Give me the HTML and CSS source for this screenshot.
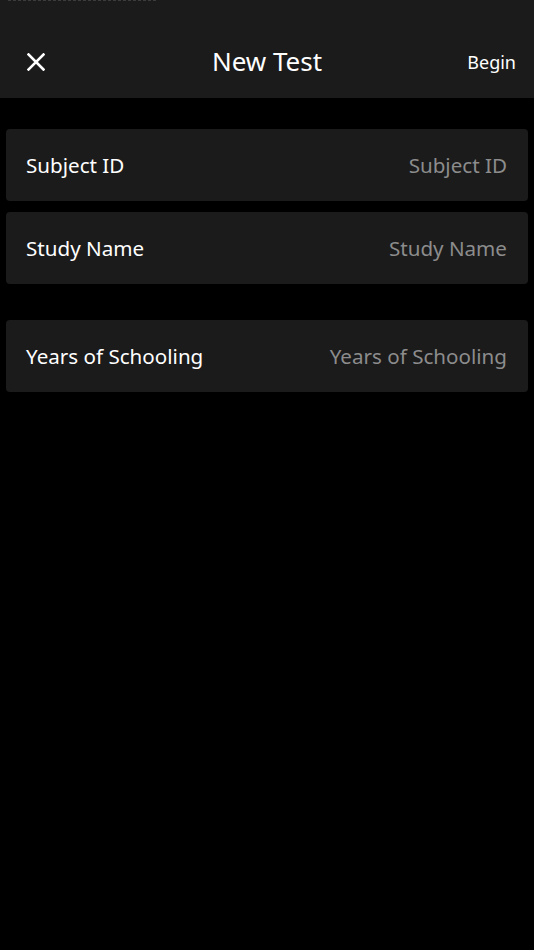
FILE: index.html
```html
<!DOCTYPE html>
<html>
<head>
<meta charset="utf-8">
<link rel="stylesheet" href="styles.css">
</head>
<body>
<header class="header">
  <div class="status" aria-hidden="true"></div>
  <nav class="nav">
    <button class="close" aria-label="Close">
      <svg width="18" height="18" viewBox="0 0 18 18"><path d="M1.5 1.5 L16.5 16.5 M16.5 1.5 L1.5 16.5" stroke="#fff" stroke-width="2.6" stroke-linecap="square" fill="none"/></svg>
    </button>
    <h1 class="title">New Test</h1>
    <span class="begin">Begin</span>
  </nav>
</header>
<main class="form">
  <section class="group">
    <div class="row"><span class="label">Subject ID</span><span class="placeholder">Subject ID</span></div>
    <div class="row"><span class="label">Study Name</span><span class="placeholder">Study Name</span></div>
  </section>
  <section class="group">
    <div class="row"><span class="label">Years of Schooling</span><span class="placeholder">Years of Schooling</span></div>
  </section>
</main>
</body>
</html>
```

FILE: styles.css
```css
html, body {
  margin: 0;
  padding: 0;
  background: #000;
  font-family: "Noto Sans", "Open Sans", sans-serif;
  color: #fff;
}
.header {
  background: #1b1b1b;
  height: 98px;
  box-sizing: border-box;
  padding-top: 26px;
  position: relative;
}
.status {
  position: absolute;
  top: 0;
  left: 8px;
  width: 148px;
  height: 0;
  border-top: 1px dashed #3c3c3c;
}
.nav {
  height: 72px;
  display: grid;
  grid-template-columns: 1fr auto 1fr;
  align-items: center;
  padding: 0 18px;
}
.close {
  justify-self: start;
  background: none;
  border: 0;
  padding: 0;
  margin-left: 9px;
  width: 18px;
  height: 18px;
  display: flex;
}
.title {
  margin: 0;
  font-size: 26px;
  font-weight: 400;
  line-height: 1;
  position: relative;
  top: -1px;
}
.begin {
  justify-self: end;
  font-size: 18px;
  line-height: 1;
}
.form {
  padding: 31px 6px 0;
  display: flex;
  flex-direction: column;
  gap: 36px;
}
.group {
  display: flex;
  flex-direction: column;
  gap: 11px;
}
.row {
  height: 72px;
  background: #1b1b1b;
  border-radius: 4px;
  display: flex;
  align-items: center;
  justify-content: space-between;
  padding: 0 21px 0 20px;
  font-size: 20.6px;
}
.label {
  color: #fff;
}
.placeholder {
  color: #8c8c8c;
}
```
